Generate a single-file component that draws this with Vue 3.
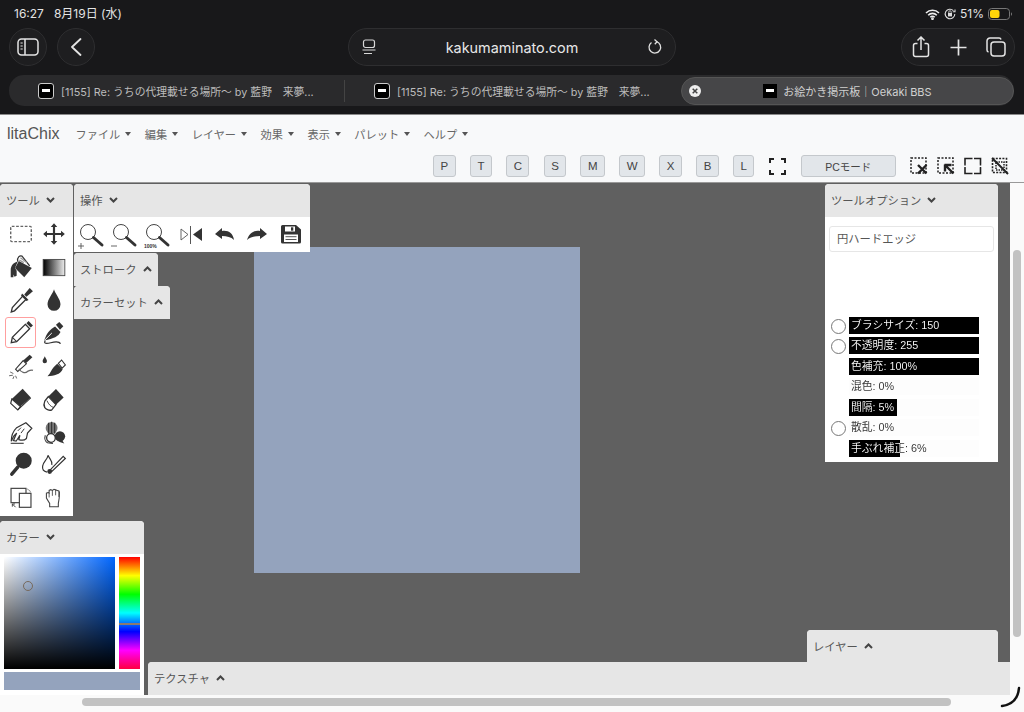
<template>
  <div class="page">
    <div class="safari">
      <div class="status">
        <span class="clock">16:27</span>
        <span>8月19日 (水)</span>
        <span class="status-right">
          <svg width="15" height="11" viewBox="0 0 15 11" fill="none" stroke="#eee" stroke-width="1.6"><path d="M1 4a9.2 9.2 0 0 1 13 0M3.2 6.2a6 6 0 0 1 8.6 0M5.3 8.2a3 3 0 0 1 4.4 0"/><circle cx="7.5" cy="9.7" r=".6"/></svg>
          <svg width="12" height="12" viewBox="0 0 12 12" fill="none" stroke="#ddd" stroke-width="1.1"><path d="M10.8 6a4.8 4.8 0 1 1-1.4-3.4M11 1.5v2.2H8.8"/><rect x="4" y="5" width="4" height="3.4" fill="#ddd" stroke="none"/><path d="M4.8 5V3.9a1.2 1.2 0 0 1 2.4 0V5" stroke-width=".8"/></svg>
          <span>51%</span>
          <svg width="24" height="12" viewBox="0 0 24 12"><rect x=".5" y=".5" width="21" height="11" rx="3.2" fill="none" stroke="#777"/><rect x="2" y="2" width="9.5" height="8" rx="2" fill="#ffd60a"/><path d="M23 4.2v3.6a2 2 0 0 0 1-1.8 2 2 0 0 0-1-1.8z" fill="#777"/></svg>
        </span>
      </div>
      <div class="toolbar">
        <div class="toolbar-left">
          <div class="round">
            <svg width="22" height="18" viewBox="0 0 22 18" fill="none" stroke="#e4e4e4" stroke-width="1.5"><rect x="1" y="1" width="20" height="16" rx="3.5"/><path d="M8 1v16"/><path d="M3.5 5h2.2M3.5 8h2.2M3.5 11h2.2" stroke-width="1.2"/></svg>
          </div>
          <div class="round">
            <svg width="12" height="18" viewBox="0 0 12 18" fill="none" stroke="#e4e4e4" stroke-width="1.8" stroke-linecap="round" stroke-linejoin="round"><path d="M10.5 1 2 9l8.500 8"/></svg>
          </div>
        </div>
        <div class="address">
          <svg width="14" height="16" viewBox="0 0 14 16" fill="none" stroke="#d8d8d8" stroke-width="1.2"><rect x="1.500" y="1" width="11" height="7.500" rx="2"/><path d="M.5 11h13M2 14.500h8"/></svg>
          <span class="host">kakumaminato.com</span>
          <svg width="14" height="16" viewBox="0 0 14 16" fill="none" stroke="#e0e0e0" stroke-width="1.300"><path d="M8.500 2.700a5.800 5.800 0 1 1-5 .8"/><path d="M6.500.5 9 2.800 6.800 5.200"/></svg>
        </div>
        <div class="actions">
          <svg width="18" height="22" viewBox="0 0 18 22" fill="none" stroke="#e4e4e4" stroke-width="1.5"><path d="M5.500 7.500H3.500A2 2 0 0 0 1.500 9.500v9a2 2 0 0 0 2 2h11a2 2 0 0 0 2-2v-9a2 2 0 0 0-2-2h-2M9 14V1.500M5.500 4.500 9 1l3.500 3.500"/></svg>
          <svg width="17" height="17" viewBox="0 0 17 17" fill="none" stroke="#e4e4e4" stroke-width="1.700"><path d="M8.500.5v16M.5 8.500h16"/></svg>
          <svg width="20" height="20" viewBox="0 0 20 20" fill="none" stroke="#e4e4e4" stroke-width="1.500"><rect x="5" y="5" width="14" height="14" rx="3"/><path d="M15 2.500A2 2 0 0 0 13 1H4a3 3 0 0 0-3 3v9a2 2 0 0 0 1.500 2"/></svg>
        </div>
      </div>
      <div class="tabs">
        <div class="tab" v-for="n in 2" :key="n">
          <span class="favicon outlined"><i></i></span>
          <span class="tab-title">[1155] Re: うちの代理載せる場所～ by 藍野　来夢...</span>
        </div>
        <div class="tab-active">
          <span class="tab-close">
            <svg width="6" height="6" viewBox="0 0 6 6" stroke="#444" stroke-width="1.500"><path d="M.7.7l4.600 4.600M5.300.7.700 5.300"/></svg>
          </span>
          <span class="active-label">
            <span class="favicon"><i></i></span>
            <span>お絵かき掲示板｜Oekaki BBS</span>
          </span>
        </div>
      </div>
    </div>

    <nav class="navbar">
      <div class="nav-top">
        <span class="brand">litaChix</span>
        <span class="menu" v-for="m in menus" :key="m">{{ m }}<b class="caret"></b></span>
      </div>
      <div class="nav-bottom">
        <button class="key" v-for="k in keys" :key="k">{{ k }}</button>
        <svg class="full" width="17" height="17" viewBox="0 0 17 17" fill="none" stroke="#222" stroke-width="2"><path d="M1 5V1h4M12 1h4v4M16 12v4h-4M5 16H1v-4"/></svg>
        <button class="key pc">PCモード</button>
        <div class="sel-icons">
          <svg width="18" height="18" viewBox="0 0 18 18" fill="none"><rect x="1" y="1" width="15" height="15" stroke="#222" stroke-width="1.500" stroke-dasharray="2 1.500"/><path d="M8 8l8.500 8.500M16.500 8 8 16.500" stroke="#222" stroke-width="2.400"/></svg>
          <svg width="18" height="18" viewBox="0 0 18 18" fill="none"><rect x="1" y="1" width="15" height="15" stroke="#222" stroke-width="1.500" stroke-dasharray="2 1.500"/><path d="M7.500 8h7M8 7.500v7M8.500 8.500l8 8" stroke="#222" stroke-width="2.400"/></svg>
          <svg width="18" height="18" viewBox="0 0 18 18" fill="none"><path d="M1 7V1.500h6M16.500 7V1.500H11M1 11v5.500h6M16.500 11v5.500H11" stroke="#222" stroke-width="1.600"/><path d="M7 1.500h4M7 16.500h4M1 7v4M16.500 7v4" stroke="#222" stroke-width="1.500" stroke-dasharray="1.500 1.500"/></svg>
          <svg width="18" height="18" viewBox="0 0 18 18" fill="none"><rect x="1.500" y="1.500" width="14" height="14" stroke="#222" stroke-width="1.600" stroke-dasharray="2 1.300"/><rect x="5" y="5" width="8" height="8" stroke="#222" stroke-width="1.500" stroke-dasharray="1.500 1"/><path d="M1 1l16 16" stroke="#222" stroke-width="2"/></svg>
        </div>
      </div>
    </nav>

    <div class="main">
      <div class="stage">
        <div class="drawing"></div>

        <section class="panel tool-panel">
          <header class="head">ツール <svg class="chev" width="9" height="6" viewBox="0 0 9 6" fill="none" stroke="#444" stroke-width="2"><path d="M1 1l3.500 3.500L8 1"/></svg></header>
          <div class="tool-grid">
            <div v-for="(t, i) in tools" :key="i" class="tool" :class="{ selected: i === 6 }">
              <svg width="26" height="26" viewBox="0 0 24 24" v-html="t"></svg>
            </div>
          </div>
        </section>

        <section class="panel op-panel">
          <header class="head">操作 <svg class="chev" width="9" height="6" viewBox="0 0 9 6" fill="none" stroke="#444" stroke-width="2"><path d="M1 1l3.500 3.500L8 1"/></svg></header>
          <div class="op-row">
            <svg v-for="(o, i) in ops" :key="i" width="33" height="33" viewBox="0 0 33 33" v-html="o"></svg>
          </div>
        </section>

        <section class="panel closed stroke-panel"><header class="head">ストローク <svg class="chev" width="9" height="6" viewBox="0 0 9 6" fill="none" stroke="#444" stroke-width="2"><path d="M1 5l3.500-3.500L8 5"/></svg></header></section>
        <section class="panel closed set-panel"><header class="head">カラーセット <svg class="chev" width="9" height="6" viewBox="0 0 9 6" fill="none" stroke="#444" stroke-width="2"><path d="M1 5l3.500-3.500L8 5"/></svg></header></section>

        <section class="panel option-panel">
          <header class="head">ツールオプション <svg class="chev" width="9" height="6" viewBox="0 0 9 6" fill="none" stroke="#444" stroke-width="2"><path d="M1 1l3.500 3.500L8 1"/></svg></header>
          <div class="option-body">
            <div class="brush-name">円ハードエッジ</div>
            <div class="sliders">
              <div class="slider-row" v-for="s in sliders" :key="s.label">
                <span class="radio" :class="{ hidden: !s.radio }"></span>
                <div class="slider">
                  <div class="slider-fill" :style="{ width: s.width + 'px' }"></div>
                  <span class="slider-text" :style="{ backgroundImage: `linear-gradient(to right, #fff ${s.width - 2}px, #333 ${s.width - 2}px)` }">{{ s.label }}</span>
                </div>
              </div>
            </div>
          </div>
        </section>

        <section class="panel color-panel">
          <header class="head">カラー <svg class="chev" width="9" height="6" viewBox="0 0 9 6" fill="none" stroke="#444" stroke-width="2"><path d="M1 1l3.500 3.500L8 1"/></svg></header>
          <div class="color-body">
            <div class="picker">
              <div class="sv"><span class="sv-mark"></span></div>
              <div class="hue"><span class="hue-mark"></span></div>
            </div>
            <div class="swatch"></div>
          </div>
        </section>

        <section class="panel closed layer-panel"><header class="head">レイヤー <svg class="chev" width="9" height="6" viewBox="0 0 9 6" fill="none" stroke="#444" stroke-width="2"><path d="M1 5l3.500-3.500L8 5"/></svg></header></section>
        <section class="panel closed texture-panel"><header class="head">テクスチャ <svg class="chev" width="9" height="6" viewBox="0 0 9 6" fill="none" stroke="#444" stroke-width="2"><path d="M1 5l3.500-3.500L8 5"/></svg></header></section>
      </div>
      <div class="vbar"><span class="vthumb"></span></div>
    </div>
    <div class="hbar"><span class="hthumb"></span></div>
    <svg class="corner" width="24" height="24" viewBox="0 0 24 24" fill="none" stroke="#111" stroke-width="2.500" stroke-linecap="round"><path d="M21 2Q19.500 18 4 20"/></svg>
  </div>
</template>

<script setup>
const menus = ['ファイル', '編集', 'レイヤー', '効果', '表示', 'パレット', 'ヘルプ']
const keys = ['P', 'T', 'C', 'S', 'M', 'W', 'X', 'B', 'L']

const sliders = [
  { label: 'ブラシサイズ: 150', width: 130, radio: true },
  { label: '不透明度: 255', width: 130, radio: true },
  { label: '色補充: 100%', width: 130, radio: false },
  { label: '混色: 0%', width: 0, radio: false },
  { label: '間隔: 5%', width: 48, radio: false },
  { label: '散乱: 0%', width: 0, radio: true },
  { label: '手ぶれ補正: 6%', width: 51, radio: false }
]

// tool icons, 24x24
const tools = [
  '<rect x="2.500" y="5" width="19" height="14" rx="1" fill="none" stroke="#666" stroke-width="1.300" stroke-dasharray="2.500 1.500"/>',
  '<path d="M12 2l3 3.500h-2V11h5.500V9l3.500 3-3.500 3v-2H13v5.500h2L12 22l-3-3.500h2V13H5.500v2L2 12l3.500-3v2H11V5.500H9z" fill="#333"/>',
  '<path d="M10 6.500L22 13 15 21.500 6.500 13z" fill="#333"/><path d="M9 7C5 8 2.500 11 2.500 15V21.500H5V19L6 21 8 20V15.500L6.500 13z" fill="#333"/><path d="M9 7C8 3 11 1 13 2L20 11" fill="none" stroke="#333" stroke-width="1.200"/><path d="M11.500 3.500l6 4.500M10.500 5.500l4 2.500" stroke="#999" stroke-width="1.200"/>',
  '<defs><linearGradient id="tg"><stop offset="0" stop-color="#000"/><stop offset="1" stop-color="#eee"/></linearGradient></defs><rect x="2" y="5" width="20" height="15" fill="url(#tg)" stroke="#444" stroke-width=".8"/>',
  '<path d="M14 8l3 3L6 22l-3 1 1-4z" fill="#fff" stroke="#333" stroke-width="1.200"/><path d="M13 6l6 6-2 1-5-5z" fill="#333"/><path d="M15 7l5-6 3 3-6 5z" fill="#333"/>',
  '<path d="M12 2c1 4 6 9 6 14a6 6 0 0 1-12 0c0-5 5-10 6-14z" fill="#333"/>',
  '<path d="M16 4l4 4L8 20l-5 1 1-5z" fill="#fff" stroke="#333" stroke-width="1.200"/><path d="M17 3l2-2 4 4-2 2z" fill="#333"/><path d="M4 16l4 4" stroke="#333" stroke-width="1"/>',
  '<path d="M13.800 4.300L16.900 1.800 20.600 5.800 17.500 8.900z" fill="#333"/><path d="M13 6L18 11C16 15 12 17 3 19 5 12 8 9 13 6z" fill="#333"/><path d="M3.500 18.500L10 12" stroke="#fff" stroke-width=".9"/><path d="M4 19C2 22 5 22 9 21 13 20 17 20 18 22" fill="none" stroke="#333" stroke-width="1.100"/>',
  '<path d="M20 1.500l2.500 2.500-6 5.500-2.500-2.500z" fill="#333"/><path d="M14 7l3 3-8 7-2-2z" fill="#fff" stroke="#333" stroke-width="1"/><path d="M10 14.500C12 18 16 19 18 17 20 16 22 15.500 23 16" fill="none" stroke="#666" stroke-width="1.200"/><path d="M5 19L2 17.500M4.500 20.500L1 21M5.500 21.500L4.500 24M7 21L8 23.500" stroke="#555" stroke-width=".8"/>',
  '<path d="M16 9.500L19 6.500 22.500 11 19.500 14z" fill="#fff" stroke="#333" stroke-width="1"/><path d="M15 10L20 15C18 20 12 21 6 21.500 9 19 9 15 15 10z" fill="#333"/><path d="M3.500 3c.8 2 2 3 2 4.500a2 2 0 0 1-4 0c0-1.500 1.200-2.500 2-4.500z" fill="#333"/>',
  '<path d="M13.500 2.500L21 10.500 11.500 19 3.500 12z" fill="#333"/><path d="M3.500 12L11.500 19 9 22 2.500 16z" fill="#fff" stroke="#333" stroke-width="1.100"/><path d="M9 22L21 11" stroke="#333" stroke-width="1"/>',
  '<path d="M13.800 2.800L20.900 10.500 13.800 17.200 6.800 9.800z" fill="#333"/><path d="M6.800 9.800L13.800 17.200 10 22C8 23 5 22 3.500 20 2.500 18 2.500 16 3.500 14z" fill="#fff" stroke="#333" stroke-width="1.200"/><path d="M5.500 13.500C7 17 9 19 12 20" fill="none" stroke="#333" stroke-width=".8"/>',
  '<path d="M2.500 22.500h12" stroke="#555" stroke-width="1.200"/><path d="M16.500 3.500L22 8.500 18 13 17 18C15 20 13 20 10 19L11 15 7.500 20.500 5 20 8 13 5.500 15.500 3 20.500C3 16 5 11 8 8z" fill="#fff" stroke="#333" stroke-width="1.100"/><path d="M12 8l-3 3M15 9l-3 4" fill="none" stroke="#333" stroke-width=".9"/>',
  '<circle cx="9.800" cy="8.300" r="5.500" fill="#777"/><path d="M7 3.500v10M9.800 2.500v12M12.600 3.500v10" stroke="#333" stroke-width="1"/><circle cx="17.500" cy="16" r="4.800" fill="#333"/><path d="M19 19l2.500 3.500-5-1.500z" fill="#333"/><circle cx="9.200" cy="17.500" r="4" fill="#fff" stroke="#333" stroke-width="1.200"/><path d="M4 15c-1 3 0 6 2 7l5 .5" fill="none" stroke="#333" stroke-width="1"/>',
  '<circle cx="14.500" cy="8" r="7.400" fill="#333"/><path d="M9 14l-5.500 6.500" stroke="#333" stroke-width="3.200" stroke-linecap="round"/>',
  '<path d="M20.500 4L22.500 6 10 18 8.500 16.500z" fill="#fff" stroke="#333" stroke-width="1.100"/><circle cx="8" cy="18" r="2.200" fill="#333"/><path d="M6.500 3C8 7 11 8 10 12M6.500 3C6 7 2 9 1.500 13 1 16 3 18 5.500 18.500" fill="none" stroke="#333" stroke-width="1.100"/>',
  '<rect x="2.800" y="3.100" width="13.800" height="13.200" fill="#fff" stroke="#444" stroke-width="1.100"/><rect x="10.500" y="7.700" width="10.700" height="12.900" fill="#fff" stroke="#444" stroke-width="1.100"/><path d="M4 17.500l3 3M4 17.500l2.500 0M4 17.500v2.500" stroke="#444" stroke-width=".9"/><path d="M17.500 3.500l3 2v1.500" fill="none" stroke="#888" stroke-width=".8"/>',
  '<path d="M8 20v-3L5 12V7.500l1.500-.5 1 .5V5l1.500-.7 1.500.7L12 4l1.500.5 1.500.5 1.500.5.500 1.500-.2 5L16 17v3z" fill="#fff" stroke="#444" stroke-width="1"/><path d="M7.500 7.500v4M10.500 5v5M13.500 4.500v5M16.500 6v5" stroke="#444" stroke-width=".8"/>'
]

const lens = '<circle cx="13" cy="14" r="7.500" fill="#fff" stroke="#444" stroke-width="1"/><path d="M18.500 19.500L27 27" stroke="#333" stroke-width="3" stroke-linecap="round"/>'
const ops = [
  lens + '<path d="M3 28h6M6 25v6" stroke="#555" stroke-width=".9"/>',
  lens + '<path d="M3 28h6" stroke="#555" stroke-width=".9"/>',
  lens + '<text x="3" y="30" font-size="5" font-weight="700" font-family="Liberation Sans, sans-serif" fill="#333">100%</text>',
  '<path d="M7 11l7 5.500-7 5.500z" fill="#fff" stroke="#555" stroke-width=".9"/><path d="M16.500 8v18" stroke="#555" stroke-width="1"/><path d="M28 10v13l-9-6.500z" fill="#333"/>',
  '<path d="M8 16L15 10V13C21 12 26 15 27 22 24 19 20 18 15 18V21z" fill="#333"/>',
  '<path d="M27 16L20 10V13C14 12 9 15 7 22 10 19 15 18 20 18V21z" fill="#333"/>',
  '<path d="M9.500 7H23L28 11.500V24A1.500 1.500 0 0 1 26.500 25.500H9.500A1.500 1.500 0 0 1 8 24V8.500A1.500 1.500 0 0 1 9.500 7z" fill="#333"/><rect x="12" y="8.500" width="10" height="5" fill="#fff"/><rect x="18" y="9.300" width="2.300" height="3.400" fill="#333"/><rect x="11" y="16.500" width="14" height="7.500" fill="#fff"/><path d="M12.500 18.700h11M12.500 21.500h11" stroke="#555" stroke-width="1"/>'
]
</script>

<style>
html, body {
  margin: 0;
  overflow: hidden;
  background: #18181a;
}
</style>

<style scoped>
.page {
  position: relative;
  width: 1024px;
  height: 712px;
  display: flex;
  flex-direction: column;
  overflow: hidden;
  font-family: "Liberation Sans", "Noto Sans CJK JP", sans-serif;
}

.safari {
  height: 114px;
  background: #18181a;
  color: #e4e4e4;
  font-family: Inter, "Noto Sans CJK JP", sans-serif;
  border-bottom: 1px solid #8a8a8a;
}
.status {
  height: 28px;
  box-sizing: border-box;
  padding: 6px 12px 0 14px;
  display: flex;
  align-items: flex-start;
  gap: 10px;
  font-size: 12px;
  line-height: 16px;
}
.status-right {
  margin-left: auto;
  display: flex;
  align-items: center;
  gap: 4px;
  height: 16px;
  font-size: 12px;
}
.toolbar {
  height: 38px;
  padding: 0 9px;
  display: grid;
  grid-template-columns: 339px 328px 1fr;
}
.toolbar-left {
  display: flex;
  gap: 10px;
}
.round {
  width: 38px;
  height: 38px;
  box-sizing: border-box;
  border-radius: 50%;
  border: 1px solid #2e2e30;
  background: #1e1e20;
  display: flex;
  align-items: center;
  justify-content: center;
}
.address {
  height: 38px;
  box-sizing: border-box;
  border: 1px solid #2e2e30;
  border-radius: 19px;
  background: #1e1e20;
  display: flex;
  align-items: center;
  justify-content: space-between;
  padding: 0 13px;
}
.host {
  font-size: 14.400px;
  color: #e8e8e8;
}
.actions {
  justify-self: end;
  width: 114px;
  height: 38px;
  box-sizing: border-box;
  border: 1px solid #2e2e30;
  border-radius: 19px;
  background: #1e1e20;
  display: flex;
  align-items: center;
  justify-content: space-between;
  padding: 0 8px 0 10px;
}
.tabs {
  margin: 9px 10px 0 9px;
  height: 31px;
  background: #2a2a2c;
  border-radius: 15px;
  display: flex;
  align-items: center;
}
.tab {
  width: 336px;
  height: 22px;
  box-sizing: border-box;
  padding-left: 29px;
  display: flex;
  align-items: center;
  gap: 7px;
  border-right: 1px solid #444;
}
.tab:nth-child(2) {
  border-right: none;
}
.tab-title {
  font-size: 10.800px;
  color: #bcbcbc;
  white-space: pre;
}
.favicon {
  width: 14px;
  height: 14px;
  flex: none;
  background: #000;
  display: flex;
  align-items: center;
  justify-content: center;
}
.favicon.outlined {
  border: 1px solid #ccc;
  border-radius: 3px;
  box-sizing: border-box;
  width: 16px;
  height: 16px;
}
.favicon i {
  width: 8px;
  height: 3px;
  background: #fff;
}
.tab-active {
  position: relative;
  flex: 1;
  margin-left: 0;
  height: 28px;
  border-radius: 14px;
  background: #464648;
  border: 1px solid #555;
  box-sizing: border-box;
  display: flex;
  align-items: center;
  justify-content: center;
}
.tab-close {
  position: absolute;
  left: 7px;
  top: 7px;
  width: 12px;
  height: 12px;
  border-radius: 50%;
  background: #eee;
  display: flex;
  align-items: center;
  justify-content: center;
}
.active-label {
  display: flex;
  align-items: center;
  gap: 6px;
  font-size: 11px;
  color: #d0d0d0;
}

.navbar {
  height: 68px;
  flex: none;
  box-sizing: border-box;
  background: #f8f9fa;
  border-bottom: 1px solid #999;
  padding: 0 15px 5px 7px;
  display: flex;
  flex-direction: column;
  justify-content: space-between;
}
.nav-top {
  display: flex;
  align-items: center;
  height: 38px;
  gap: 13.500px;
}
.brand {
  font-size: 16px;
  color: #555;
  margin-right: 2.500px;
}
.menu {
  font-size: 11.200px;
  color: #666;
  display: flex;
  align-items: center;
}
.caret {
  margin-left: 5px;
  border-top: 4px solid #555;
  border-left: 3px solid transparent;
  border-right: 3px solid transparent;
}
.nav-bottom {
  display: flex;
  justify-content: flex-end;
  align-items: center;
  gap: 14.200px;
}
.key {
  height: 22px;
  padding: 0 6.500px;
  border: 1px solid #c4c8cc;
  border-radius: 3px;
  background: #e2e6ea;
  color: #444;
  font-family: inherit;
  font-size: 11.500px;
}
.key.pc {
  width: 95px;
  margin-left: 1px;
  font-size: 10.500px;
}
.sel-icons {
  display: flex;
  gap: 9px;
}

.main {
  flex: 1;
  display: flex;
  min-height: 0;
}
.stage {
  position: relative;
  flex: 1;
  background: #606060;
}
.vbar {
  width: 14px;
  flex: none;
  background: #fafafa;
  position: relative;
}
.vthumb {
  position: absolute;
  left: 3px;
  top: 67px;
  width: 8px;
  height: 387px;
  border-radius: 4px;
  background: #c2c2c2;
}
.hbar {
  height: 17px;
  flex: none;
  background: #fafafa;
  position: relative;
}
.hthumb {
  position: absolute;
  left: 82px;
  top: 3px;
  width: 869px;
  height: 8px;
  border-radius: 4px;
  background: #c2c2c2;
}
.corner {
  position: absolute;
  right: 2px;
  bottom: 2px;
}

.drawing {
  position: absolute;
  left: 254px;
  top: 64px;
  width: 326px;
  height: 326px;
  background: #94a3bd;
}

.panel {
  position: absolute;
  background: #fff;
  border-radius: 4px 4px 0 0;
}
.closed {
  background: #e6e6e6;
  border-radius: 4px;
}
.head {
  height: 33px;
  box-sizing: border-box;
  padding: 0 0 2px 6px;
  display: flex;
  align-items: center;
  background: #e6e6e6;
  color: #555;
  font-size: 11.300px;
  border-radius: 4px 4px 0 0;
}
.chev {
  margin-left: 6px;
}

.tool-panel {
  left: 0;
  top: 1px;
  width: 73px;
  height: 332px;
}
.tool-grid {
  display: grid;
  grid-template-columns: 33px 33px;
  grid-auto-rows: 33px;
  padding: 0 3px 0 4px;
}
.tool {
  display: flex;
  align-items: center;
  justify-content: center;
  border-radius: 3px;
}
.tool.selected {
  box-sizing: border-box;
  border: 1.500px solid #ff9f9f;
  width: 31px;
  height: 31px;
  margin: 1px;
}

.op-panel {
  left: 74px;
  top: 1px;
  width: 236px;
  height: 68px;
}
.op-row {
  display: flex;
  height: 35px;
  align-items: center;
  padding-left: 1px;
}
.stroke-panel {
  left: 74px;
  top: 70px;
  width: 84px;
}
.set-panel {
  left: 74px;
  top: 103px;
  width: 96px;
}
.layer-panel {
  left: 807px;
  top: 447px;
  width: 191px;
  height: 40px;
  border-radius: 4px 4px 0 0;
}
.texture-panel {
  left: 148px;
  top: 479px;
  right: -1px;
  border-radius: 4px 0 0 0;
}

.option-panel {
  left: 825px;
  top: 1px;
  width: 173px;
  height: 278px;
}
.option-body {
  padding: 9px 4px 0;
}
.brush-name {
  height: 26px;
  box-sizing: border-box;
  border: 1px solid #e6e6e6;
  border-radius: 3px;
  padding-left: 7px;
  font-size: 11.300px;
  line-height: 24px;
  color: #555;
}
.sliders {
  margin-top: 64.500px;
  display: flex;
  flex-direction: column;
  gap: 3.500px;
  margin-left: 2px;
}
.slider-row {
  display: flex;
  align-items: center;
  gap: 3px;
}
.radio {
  width: 15px;
  height: 15px;
  box-sizing: border-box;
  border: 1.500px solid #777;
  border-radius: 50%;
  flex: none;
  position: relative;
  top: 1px;
}
.radio.hidden {
  visibility: hidden;
}
.slider {
  position: relative;
  width: 130px;
  height: 17px;
  background: #fdfdfd;
}
.slider-text {
  position: absolute;
  left: 2px;
  top: 0;
  line-height: 17px;
  font-size: 10.800px;
  white-space: nowrap;
  color: transparent;
  -webkit-background-clip: text;
  background-clip: text;
}
.slider-fill {
  position: absolute;
  left: 0;
  top: 0;
  height: 17px;
  background: #000;
}

.color-panel {
  left: 0;
  top: 338px;
  width: 144px;
  height: 174px;
}
.color-body {
  padding: 3px 4px 0;
}
.picker {
  display: flex;
  gap: 4px;
}
.sv {
  position: relative;
  width: 111px;
  height: 112px;
  background: linear-gradient(to bottom, transparent, #000), linear-gradient(to right, #fff, #0066ff);
}
.sv-mark {
  position: absolute;
  left: 19px;
  top: 24px;
  width: 10px;
  height: 10px;
  box-sizing: border-box;
  border: 1.500px solid #77695c;
  border-radius: 50%;
}
.hue {
  position: relative;
  width: 21px;
  height: 112px;
  background: linear-gradient(to bottom, #f00, #ff0, #0f0, #0ff, #00f, #f0f, #ff0040);
}
.hue-mark {
  position: absolute;
  left: 0;
  top: 66px;
  width: 21px;
  height: 2px;
  background: #8a7a70;
}
.swatch {
  margin-top: 3px;
  height: 18px;
  background: #94a3bd;
}
</style>
